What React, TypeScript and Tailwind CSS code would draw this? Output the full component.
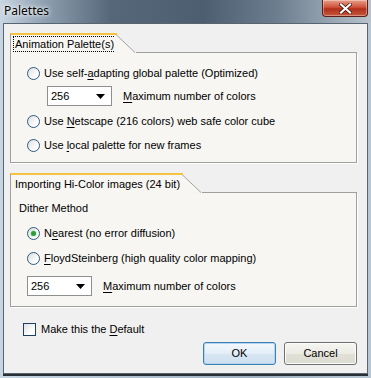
import React from "react";

const font = "font-['Liberation_Sans',Arial,sans-serif]";

const U: React.FC<{ children: React.ReactNode }> = ({ children }) => <span className="underline underline-offset-[2px]">{children}</span>;

const Radio: React.FC<{ checked?: boolean }> = ({ checked }) => (
  <span className="flex h-[13px] w-[13px] shrink-0 items-center justify-center rounded-full border border-[#2c5a80] bg-[linear-gradient(135deg,#dcdcdc,#ffffff_70%)]">
    {checked && <span className="h-[5px] w-[5px] rounded-full bg-[#2f9c3c] shadow-[0_0_2px_#5fd06a]" />}
  </span>
);

const RadioRow: React.FC<{ checked?: boolean; children: React.ReactNode; className?: string }> = ({ checked, children, className }) => (
  <div className={`flex h-[18px] items-center gap-[4px] ${className ?? ""}`}>
    <Radio checked={checked} />
    <span>{children}</span>
  </div>
);

const Select: React.FC = () => (
  <div className="flex h-[20px] w-[65px] shrink-0 items-center justify-between border border-[#8e8f8f] bg-white pl-[3px] pr-[6px]">
    <span>256</span>
    <svg width="9" height="5" viewBox="0 0 9 5">
      <path d="M0 0h9L4.5 5z" fill="#000" />
    </svg>
  </div>
);

const Tab: React.FC<{ label: string; focused?: boolean }> = ({ label, focused }) => (
  <div className="flex h-[20px] items-end">
    <div className="flex h-[20px] shrink-0 items-center whitespace-nowrap border-l border-t-2 border-l-[#a0a0a0] border-t-[#f5c342] bg-[#f7f6f3] pl-[3px]">
      <span className={`px-[1px] leading-[14px] ${focused ? "outline outline-1 outline-dotted outline-black" : ""}`}>{label}</span>
    </div>
    <svg width="21" height="20" viewBox="0 0 21 20" className="shrink-0">
      <path d="M0 0.5 L1 0.5 L20.5 19.5 L0 20 Z" fill="#f7f6f3" />
      <path d="M0 1 L1 1.5 L20 19.5" fill="none" stroke="#a0a0a0" strokeWidth="1" />
      <path d="M0 1 L2 1" stroke="#f5c342" strokeWidth="2" />
    </svg>
    <div className="flex-1 border-b border-[#a0a0a0]" />
  </div>
);

export default function App() {
  return (
    <div className={`flex h-[378px] w-[371px] flex-col overflow-hidden bg-[linear-gradient(90deg,#c7d5e2,#b4c4d3_30%,#9fb0c0_70%,#b8c6d3)] text-[11px] text-black ${font}`}>
      {/* title bar */}
      <div className="flex h-[23px] shrink-0 items-start justify-between bg-[linear-gradient(90deg,#c9d6e2_0%,#8e9fb0_12%,#56677a_30%,#4d5e70_55%,#6d7e90_75%,#9aa7b4_90%,#b9c3cd_100%)]">
        <span className="pl-[4px] pt-[3px] font-['Noto_Sans',sans-serif] text-[12px] leading-[16px] text-black [text-shadow:0_0_6px_#ffffff,0_0_3px_#ffffff]">Palettes</span>
        <div className="mr-[3px] flex h-[17px] w-[46px] items-center justify-center rounded-b-[4px] border border-t-0 border-[#5a2018] bg-[linear-gradient(180deg,#e8a08c_0%,#d0523a_45%,#b0301c_55%,#c8553c_100%)] shadow-[inset_0_0_0_1px_rgba(255,255,255,0.35)]">
          <svg width="13" height="11" viewBox="0 0 13 11">
            <path d="M2 1.5 L11 9.5 M11 1.5 L2 9.5" stroke="#3a1008" strokeWidth="3.6" strokeLinecap="square" />
            <path d="M2 1.5 L11 9.5 M11 1.5 L2 9.5" stroke="#ffffff" strokeWidth="2.2" strokeLinecap="square" />
          </svg>
        </div>
      </div>

      {/* client area */}
      <div className="mx-[3px] mb-[4px] flex flex-1 flex-col border border-[#58646f] bg-[#f0f0f0] pl-[6px] pr-[10px] pt-[9px] shadow-[0_2px_0_#2a2f36]">
        {/* panel 1 */}
        <div className="flex flex-col">
          <Tab label="Animation Palette(s)" focused />
          <div className="flex flex-col border-x border-b border-[#a0a0a0] bg-[#f7f6f3] pb-[8px] pl-[16px] pt-[11px] shadow-[1px_1px_0_#ffffff]">
            <RadioRow>
              Use self-<U>a</U>dapting global palette (Optimized)
            </RadioRow>
            <div className="mt-[4px] flex items-center gap-[11px] pl-[20px]">
              <Select />
              <span>
                <U>M</U>aximum number of colors
              </span>
            </div>
            <RadioRow className="mt-[6px]">
              Use <U>N</U>etscape (216 colors) web safe color cube
            </RadioRow>
            <RadioRow className="mt-[6px]">
              Use <U>l</U>ocal palette for new frames
            </RadioRow>
          </div>
        </div>

        {/* panel 2 */}
        <div className="mt-[10px] flex flex-col">
          <Tab label="Importing Hi-Color images (24 bit)" />
          <div className="flex flex-col border-x border-b border-[#a0a0a0] bg-[#f7f6f3] pb-[10px] pl-[8px] pt-[7px] shadow-[1px_1px_0_#ffffff]">
            <div className="flex h-[16px] items-center">Dither Method</div>
            <div className="flex flex-col pl-[8px]">
              <RadioRow checked className="mt-[8px]">
                N<U>e</U>arest (no error diffusion)
              </RadioRow>
              <RadioRow className="mt-[7px]">
                <U>F</U>loydSteinberg (high quality color mapping)
              </RadioRow>
              <div className="mt-[9px] flex items-center gap-[11px]">
                <Select />
                <span>
                  <U>M</U>aximum number of colors
                </span>
              </div>
            </div>
          </div>
        </div>

        {/* default checkbox */}
        <div className="mt-[15px] flex h-[14px] items-center gap-[5px] pl-[13px]">
          <span className="h-[13px] w-[13px] shrink-0 border border-[#1e3f63] bg-[linear-gradient(135deg,#e0e0e0,#ffffff_70%)]" />
          <span>
            Make this the <U>D</U>efault
          </span>
        </div>

        {/* buttons */}
        <div className="mt-[6px] flex justify-end gap-[8px]">
          <button className="flex h-[23px] w-[73px] items-center justify-center rounded-[3px] border border-[#3c7fb1] bg-[linear-gradient(180deg,#f4f8fc,#e4eef8_50%,#d8e6f3_51%,#cfe0f0)] shadow-[inset_0_0_0_1px_#b4d4f2]">
            OK
          </button>
          <button className="flex h-[23px] w-[73px] items-center justify-center rounded-[3px] border border-[#707070] bg-[linear-gradient(180deg,#f6f6f2,#ecebe4_50%,#e2e1d8_51%,#dddcd2)] shadow-[inset_0_0_0_1px_#fcfcfa]">
            Cancel
          </button>
        </div>
      </div>
    </div>
  );
}
